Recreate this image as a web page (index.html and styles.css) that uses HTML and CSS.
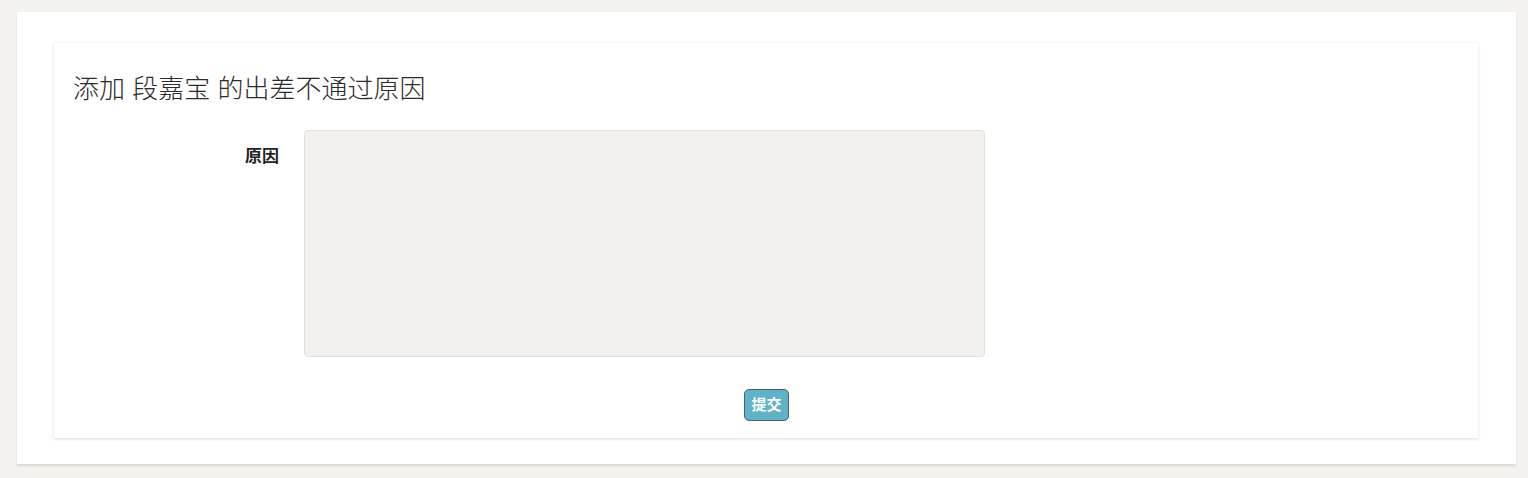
FILE: index.html
```html
<!DOCTYPE html>
<html lang="zh-CN">
<head>
<meta charset="utf-8">
<title>出差不通过原因</title>
<link rel="stylesheet" href="styles.css">
</head>
<body>
<div class="page">
  <div class="panel">
    <div class="card">
      <h3 class="card-title">添加 段嘉宝 的出差不通过原因</h3>
      <form class="form">
        <div class="form-row">
          <label class="form-label" for="reason">原因</label>
          <textarea id="reason" class="form-textarea"></textarea>
        </div>
        <div class="form-actions">
          <button type="button" class="btn-submit">提交</button>
        </div>
      </form>
    </div>
  </div>
</div>
</body>
</html>
```
FILE: styles.css
```css
* { box-sizing: border-box; }
html, body {
  margin: 0;
  padding: 0;
  background: #f3f2ee;
  font-family: "Liberation Sans", "Noto Sans CJK SC", sans-serif;
  color: #333;
}
.page {
  padding: 12px 12px 0 17px;
  height: 478px;
}
.panel {
  background: #fff;
  height: 452px;
  padding: 31px 38px 0 37px;
  box-shadow: 0 2px 2px rgba(150, 130, 110, 0.22);
}
.card {
  background: #fff;
  height: 395px;
  padding: 31px 20px 0 19px;
  box-shadow: 0 1px 3px rgba(120, 110, 100, 0.25);
  display: flex;
  flex-direction: column;
}
.card-title {
  margin: 0;
  font-size: 26px;
  font-weight: 300;
  line-height: 30px;
  color: #2b2b2b;
}
.form {
  margin-top: 26px;
  display: flex;
  flex-direction: column;
}
.form-row {
  display: flex;
  align-items: flex-start;
  gap: 25px;
}
.form-label {
  width: 206px;
  text-align: right;
  font-weight: 700;
  font-size: 17px;
  line-height: 20px;
  padding-top: 17px;
  color: #222;
}
.form-textarea {
  width: 681px;
  height: 227px;
  background: #f2f1ed;
  border: 1px solid #e3e1dc;
  border-radius: 4px;
  resize: none;
  margin: 0;
  padding: 6px 10px;
  font-family: inherit;
  font-size: 14px;
}
.form-actions {
  display: flex;
  justify-content: center;
  margin-top: 32px;
  padding-left: 2px;
}
.btn-submit {
  width: 45px;
  height: 32px;
  padding: 0;
  background: #60b2c7;
  border: 1px solid #46636c;
  border-radius: 5px;
  color: #fff;
  font-family: "Liberation Sans", "Noto Sans CJK SC", sans-serif;
  font-weight: 700;
  font-size: 15px;
  line-height: 30px;
}
```
